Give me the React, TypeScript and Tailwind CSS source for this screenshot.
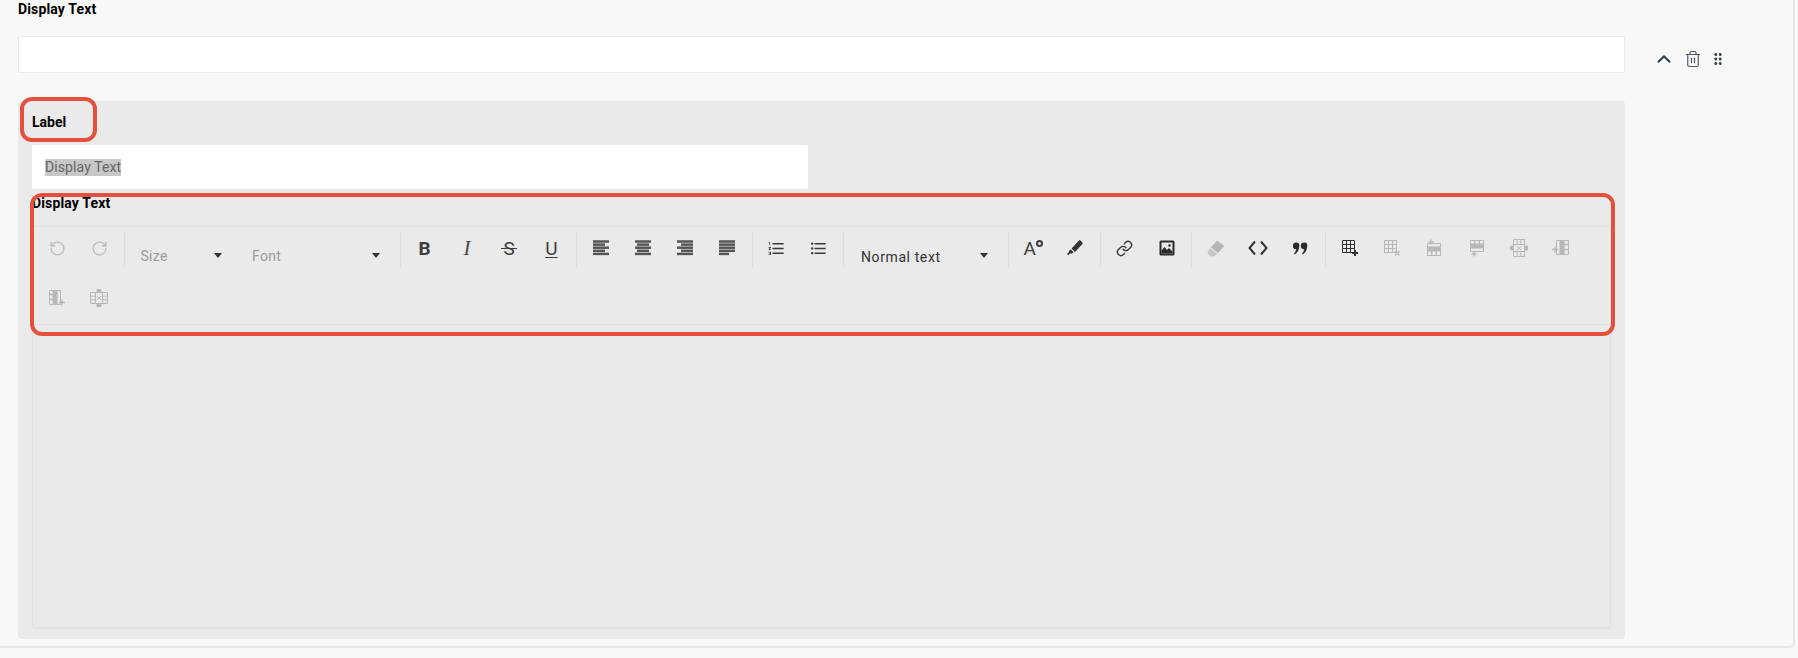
import React from 'react';
import { ChevronUp, Trash2, RotateCcw, RotateCw, Link } from 'lucide-react';
import { MdFormatListNumbered, MdFormatListBulleted, MdDragIndicator } from 'react-icons/md';

const Caret = ({ className = '' }: { className?: string }) => (
  <svg width="8" height="5" viewBox="0 0 8 5" className={className}>
    <path d="M0 0h8L4 5z" fill="#333" />
  </svg>
);

// five bars, widths and offsets change per alignment
const AlignIcon = ({ rows }: { rows: [number, number][] }) => (
  <svg width="16" height="16" viewBox="0 0 16 16" fill="#555">
    {rows.map(([x, w], i) => (
      <rect key={i} x={x} y={0.25 + i * 3.1} width={w} height="2.5" />
    ))}
  </svg>
);

const TableIcon = ({ kind }: { kind: string }) => {
  const c = kind === 'add' ? '#333' : '#b8b8b8';
  return (
    <svg width="18" height="18" viewBox="0 0 18 18" fill="none" stroke={c} strokeWidth="1">
      {kind === 'add' && (
        <>
          <path d="M1.5 1.5h12v12h-12zM1.5 5.5h12M1.5 9.5h12M5.5 1.5v12M9.5 1.5v12" />
          <path d="M14 11v6M11 14h6" strokeWidth="2" />
        </>
      )}
      {kind === 'remove' && (
        <>
          <path d="M1.5 1.5h12v12h-12zM1.5 5.5h12M1.5 9.5h12M5.5 1.5v12M9.5 1.5v12" />
          <path d="M12 12l4.5 4.5M16.5 12L12 16.5" strokeWidth="1.2" />
        </>
      )}
      {kind === 'rowAbove' && (
        <>
          <path d="M2.5 4.5h13v12h-13z" />
          <path d="M2.5 8h13v4h-13z" fill={c} />
          <path d="M6 0.5v5M3.5 3h5M6.7 12v4.5M11.3 12v4.5" strokeWidth="1.3" />
        </>
      )}
      {kind === 'rowBelow' && (
        <>
          <path d="M2.5 1.5h13v11h-13z" />
          <path d="M2.5 5h13v4h-13z" fill={c} />
          <path d="M6.7 1.5v3.5M11.3 1.5v3.5M6 12v5.5M3.5 15h5" strokeWidth="1.3" />
        </>
      )}
      {kind === 'rowRemove' && (
        <>
          <path d="M3.5 0.5h11v17h-11zM3.5 5.500h11M3.5 12.500h11M7.200 0.500v5M10.800 0.500v5M7.200 12.500v5M10.800 12.500v5" />
          <path d="M0.500 7h3v4h-3zM14.500 7h3v4h-3z" fill={c} />
          <path d="M7 7.500l4 3.500M11 7.500l-4 3.500" />
        </>
      )}
      {kind === 'colLeft' && (
        <>
          <path d="M4.500 1.500h12v14h-12z" />
          <path d="M8 1.500h4v14H8z" fill={c} />
          <path d="M12 5.500h4.500M12 10.500h4.500M0 10.500h6M3 7.500v6" strokeWidth="1.300" />
        </>
      )}
      {kind === 'colRight' && (
        <>
          <path d="M1.500 1.500h11v14h-11z" />
          <path d="M5 1.500h4v14H5z" fill={c} />
          <path d="M1.500 5.500H5M1.500 10.500H5M11 13.500h6M14 10.500v6" strokeWidth="1.300" />
        </>
      )}
      {kind === 'colRemove' && (
        <>
          <path d="M0.500 3.500h17v11H0.500zM5.500 3.500v11M12.500 3.500v11M0.500 7.200h5M0.500 10.800h5M12.500 7.200h5M12.500 10.800h5" />
          <path d="M7 0.500h4v3H7zM7 14.500h4v3H7z" fill={c} />
          <path d="M7 7l4 4M11 7l-4 4" />
        </>
      )}
    </svg>
  );
};

const PenIcon = () => (
  <svg width="16" height="16" viewBox="0 0 16 16" fill="#333">
    <path d="M12 0.500c.6-.4 1.200-.3 1.700.2l1.600 1.600c.5.5.5 1.200.1 1.700L8 12 4.500 8.500z" />
    <path d="M3.800 9.500l2.800 2.800-1.500 1.200-2.300.1-1.500 1.700L0 14l1.900-1.900.3-1.600z" />
  </svg>
);

const ImageIcon = () => (
  <svg width="16" height="16" viewBox="0 0 16 16">
    <rect x="0.500" y="0.500" width="15" height="15" rx="1.500" fill="#2b2b2b" />
    <rect x="2.500" y="2.500" width="11" height="11" fill="#e6e6e6" />
    <path d="M2.500 13.500v-3l3-3.500 2.500 3 2-2 3.500 3.500v2z" fill="#2b2b2b" />
    <circle cx="10.500" cy="5.500" r="1.200" fill="#2b2b2b" />
  </svg>
);

const EraserIcon = () => (
  <svg width="18" height="17" viewBox="0 0 18 17">
    <path d="M10 0.500L17.500 6 11 13 4 7.500z" fill="#b6b6b6" />
    <path d="M3.300 8.300l6.900 5.400-2.400 2.600H3.500L0.800 13.500c-.4-.5-.3-1 0-1.400z" fill="#c6c6c6" />
  </svg>
);

const CodeIcon = () => (
  <svg width="20" height="16" viewBox="0 0 20 16" fill="none" stroke="#333" strokeWidth="2">
    <path d="M7 1.500L1.500 8 7 14.500M13 1.500L18.500 8 13 14.500" />
  </svg>
);

const QuoteIcon = () => (
  <svg width="15" height="13" viewBox="0 0 15 13" fill="#2b2b2b">
    <path d="M3.300 0.500a3 3 0 0 1 3 3.200c0 3.800-2 7.200-4.500 8.800l-.8-.9c1.300-1.300 2-2.700 2.100-4.300A3 3 0 0 1 3.300 0.500z" />
    <path d="M11.300 0.500a3 3 0 0 1 3 3.200c0 3.800-2 7.200-4.500 8.800l-.8-.9c1.300-1.300 2-2.700 2.100-4.300a3 3 0 0 1 .2-6.800z" />
  </svg>
);

const Btn = ({ children }: { children: React.ReactNode }) => (
  <button className="w-[42.25px] h-[36px] flex items-center justify-center pb-[2px]">{children}</button>
);

const Group = ({ children, last }: { children: React.ReactNode; last?: boolean }) => (
  <div className={`flex h-[36px] px-[3px] mb-[14px] ${last ? '' : 'border-r border-[#dedede]'}`}>{children}</div>
);

const Toolbar = () => {
  const dark = 'text-[#3a3a3a]';
  const glyph = 'text-[19px] leading-none text-[#3d3d3d]';
  return (
    <div className="flex flex-wrap h-[98px] pt-[4px] border-b border-[#e2e2e2] content-start">
      <Group>
        <Btn><RotateCcw size={17} strokeWidth={2} className="text-[#bdbdbd]" /></Btn>
        <Btn><RotateCw size={17} strokeWidth={2} className="text-[#bdbdbd]" /></Btn>
      </Group>

      <Group>
        <div className="w-[269px] flex items-center text-[14px] text-[#9a9a9a] tracking-[0.3px] pt-[15px]">
          <span className="w-[124.5px] pl-[13px] pr-[30px] flex items-center justify-between">
            Size
            <Caret className="mt-[-3px]" />
          </span>
          <span className="flex-1 pr-[16.5px] flex items-center justify-between">
            Font
            <Caret className="mt-[-3px]" />
          </span>
        </div>
      </Group>

      <Group>
        <Btn><span className={`${glyph} font-bold`}>B</span></Btn>
        <Btn><span className="text-[21px] leading-none italic text-[#4a4a4a] font-['Liberation_Serif',serif]">I</span></Btn>
        <Btn>
          <span className={`relative ${glyph}`}>
            S
            <span className="absolute left-[-2px] right-[-2px] top-[9px] h-px bg-[#3d3d3d]" />
          </span>
        </Btn>
        <Btn><span className={`${glyph} underline underline-offset-[2px] decoration-1`}>U</span></Btn>
      </Group>

      <Group>
        <Btn><AlignIcon rows={[[0, 16], [0, 12], [0, 16], [0, 12], [0, 16]]} /></Btn>
        <Btn><AlignIcon rows={[[0, 16], [2, 12], [0, 16], [2, 12], [0, 16]]} /></Btn>
        <Btn><AlignIcon rows={[[0, 16], [4, 12], [0, 16], [4, 12], [0, 16]]} /></Btn>
        <Btn><AlignIcon rows={[[0, 16], [0, 16], [0, 16], [0, 16], [0, 10]]} /></Btn>
      </Group>

      <Group>
        <Btn><MdFormatListNumbered size={19} className={dark} /></Btn>
        <Btn><MdFormatListBulleted size={19} className={dark} /></Btn>
      </Group>

      <Group>
        <div className="w-[158px] flex items-center justify-between pl-[14px] pr-[17px] pt-[16px] text-[14px] text-[#333] tracking-[0.6px]">
          Normal text
          <Caret className="mt-[-4px]" />
        </div>
      </Group>

      <Group>
        <Btn>
          <span className="relative text-[19px] leading-none text-[#3d3d3d] pr-[7px]">
            A
            <span className="absolute right-0 top-[1px] w-[7px] h-[7px] rounded-full border-2 border-[#3d3d3d]" />
          </span>
        </Btn>
        <Btn><PenIcon /></Btn>
      </Group>

      <Group>
        <Btn><Link size={17} strokeWidth={2} className={dark} /></Btn>
        <Btn><ImageIcon /></Btn>
      </Group>

      <Group>
        <Btn><EraserIcon /></Btn>
        <Btn><CodeIcon /></Btn>
        <Btn><QuoteIcon /></Btn>
      </Group>

      <Group last>
        <Btn><TableIcon kind="add" /></Btn>
        <Btn><TableIcon kind="remove" /></Btn>
        <Btn><TableIcon kind="rowAbove" /></Btn>
        <Btn><TableIcon kind="rowBelow" /></Btn>
        <Btn><TableIcon kind="rowRemove" /></Btn>
        <Btn><TableIcon kind="colLeft" /></Btn>
      </Group>

      <Group last>
        <Btn><TableIcon kind="colRight" /></Btn>
        <Btn><TableIcon kind="colRemove" /></Btn>
      </Group>
    </div>
  );
};

export default function App() {
  return (
    <div className="min-h-screen bg-[#f8f8f8] font-['Roboto',sans-serif] text-black">
      <div className="w-[1795px] h-[648px] flex pl-[18px] border-r-2 border-b-2 border-[#e6e6e6] rounded-br-md">
        <div className="w-[1607px]">
          <div className="h-[36px] text-[14px] leading-[18px] font-bold tracking-[0.15px]">Display Text</div>
          <div className="h-[37px] bg-white border border-[#ececec]" />

          <div className="relative mt-[28px] h-[538px] bg-[#eaeaea] rounded-sm pl-[14px] pr-[14px]">
            <div className="h-[44px] pt-[12px] text-[14px] leading-[18px] font-bold">Label</div>
            <div className="w-[776px] h-[44px] bg-white rounded-[3px] flex items-center pl-[13px]">
              <span className="bg-[#c8c8c8] text-[#666] text-[14px] leading-[17px] tracking-[0.1px]">Display Text</span>
            </div>
            <div className="h-[37px] pt-[5px] text-[14px] leading-[18px] font-bold tracking-[0.15px]">Display Text</div>

            <div className="h-[403px] border-l border-r border-b-2 border-t border-[#e2e2e2] rounded-[3px]">
              <Toolbar />
            </div>

            <div className="absolute left-[2px] top-[-4px] w-[77px] h-[45px] border-[4px] border-[#e5503c] rounded-[12px]" />
            <div className="absolute left-[12px] top-[92px] w-[1585px] h-[143px] border-[4px] border-[#e5503c] rounded-[12px]" />
          </div>
        </div>

        <div className="h-[37px] mt-[40px] flex items-center pl-[28px]">
          <ChevronUp size={22} strokeWidth={2.2} className="text-[#2f3e4e] mr-[9px]" />
          <Trash2 size={18} strokeWidth={1.5} className="text-[#445566] mr-[7px]" />
          <MdDragIndicator size={18} className="text-[#3c4650]" />
        </div>
      </div>
    </div>
  );
}
